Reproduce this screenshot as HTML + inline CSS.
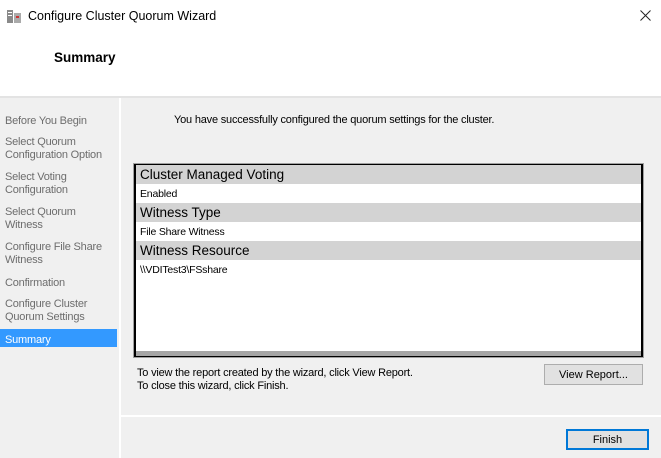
<html><head><style>
body{margin:0;width:661px;height:458px;overflow:hidden;background:#f0f0f0;font-family:"Liberation Sans",sans-serif;position:relative}
.a{position:absolute;white-space:nowrap}
.nav{color:#6d6d6d;font-size:11px;line-height:13px;left:5px;letter-spacing:-0.2px}
.t{font-size:11px;color:#000;letter-spacing:-0.2px}
.h{position:absolute;left:135px;width:507px;height:19px;background:#d3d3d3;font-size:13.5px;line-height:20px;text-indent:4px}
.r{position:absolute;left:135px;width:507px;height:19px;background:#fff;font-size:10.5px;line-height:20px;text-indent:4px;letter-spacing:-0.2px}
</style></head><body>
<div class="a" style="left:0;top:0;width:661px;height:96px;background:#fff"></div>
<div class="a" style="left:0;top:96px;width:661px;height:2px;background:#e3e3e3"></div>
<svg class="a" style="left:7px;top:10px" width="14" height="14"><rect x="0" y="0" width="6" height="13" fill="#8a8a8a"/><rect x="1" y="2" width="4" height="1" fill="#fff"/><rect x="1" y="5" width="4" height="1" fill="#fff"/><rect x="7" y="3" width="7" height="10" fill="#aaa"/><rect x="9" y="6" width="3" height="2" fill="#c33"/></svg>
<div class="a" style="left:28px;top:9px;font-size:12.5px">Configure Cluster Quorum Wizard</div>
<svg class="a" style="left:640px;top:10px" width="11" height="11"><path d="M0.5 0.5L10.5 10.5M10.5 0.5L0.5 10.5" stroke="#222" stroke-width="1"/></svg>
<div class="a" style="left:54px;top:50px;font-size:13.5px;font-weight:bold">Summary</div>
<div class="a" style="left:119px;top:98px;width:2px;height:360px;background:#fff"></div>
<div class="a nav" style="top:115px">Before You Begin</div>
<div class="a nav" style="top:136px">Select Quorum<br>Configuration Option</div>
<div class="a nav" style="top:171px">Select Voting<br>Configuration</div>
<div class="a nav" style="top:206px">Select Quorum<br>Witness</div>
<div class="a nav" style="top:241px">Configure File Share<br>Witness</div>
<div class="a nav" style="top:277px">Confirmation</div>
<div class="a nav" style="top:298px">Configure Cluster<br>Quorum Settings</div>
<div class="a" style="left:0;top:329px;width:117px;height:18px;background:#3399ff"></div>
<div class="a nav" style="top:334px;color:#fff">Summary</div>
<div class="a t" style="left:174px;top:114px">You have successfully configured the quorum settings for the cluster.</div>
<div class="a" style="left:133px;top:163px;width:509px;height:193px;border:1px solid #a0a0a0"></div>
<div class="a" style="left:134px;top:164px;width:505px;height:189px;border:2px solid #000;background:#fff"></div>
<div class="a" style="left:136px;top:351px;width:505px;height:5px;background:#a5a5a5"></div>
<div class="h" style="top:165px;left:136px;width:505px">Cluster Managed Voting</div>
<div class="r" style="top:184px;left:136px;width:505px">Enabled</div>
<div class="h" style="top:203px;left:136px;width:505px">Witness Type</div>
<div class="r" style="top:222px;left:136px;width:505px">File Share Witness</div>
<div class="h" style="top:241px;left:136px;width:505px">Witness Resource</div>
<div class="r" style="top:260px;left:136px;width:505px">\\VDITest3\FSshare</div>
<div class="a t" style="left:137px;top:367px;line-height:13px">To view the report created by the wizard, click View Report.<br>To close this wizard, click Finish.</div>
<div class="a" style="left:544px;top:364px;width:97px;height:19px;border:1px solid #adadad;background:#e1e1e1;font-size:11px;text-align:center;line-height:21px">View Report...</div>
<div class="a" style="left:121px;top:415px;width:540px;height:2px;background:#fff"></div>
<div class="a" style="left:566px;top:429px;width:79px;height:17px;border:2px solid #0078d7;background:#e1e1e1;font-size:11px;text-align:center;line-height:19px">Finish</div>
</body></html>
